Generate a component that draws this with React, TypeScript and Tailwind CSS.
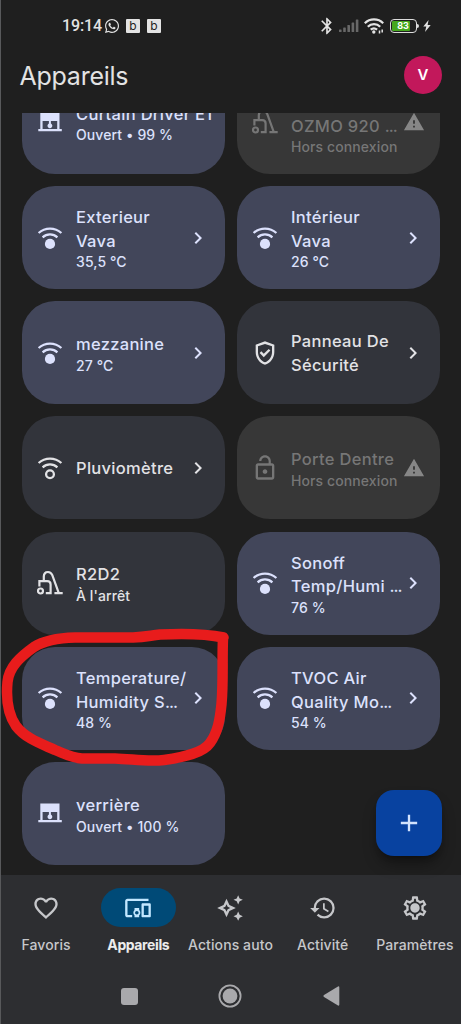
import type { ReactNode } from "react";
import {
  MdAdd,
  MdBluetooth,
  MdChevronRight,
  MdDevicesOther,
  MdFavoriteBorder,
  MdHistory,
  MdLockOpen,
  MdOutlineAutoAwesome,
  MdOutlineGppGood,
  MdOutlineSettings,
  MdWarning,
} from "react-icons/md";
import { FaWhatsapp } from "react-icons/fa";

type Tone = "on" | "off" | "offline";

type Device = {
  name: string[];
  status?: string;
  icon: ReactNode;
  tone: Tone;
  action?: "open" | "warning";
};

function SensorIcon({ filled = true }: { filled?: boolean }) {
  return (
    <svg viewBox="0 0 28 28" className="size-7" fill="none" stroke="currentColor" strokeWidth="2.3">
      <path d="M2.6 9A17 17 0 0 1 25.4 9" />
      <path d="M6.6 13.3A11 11 0 0 1 21.4 13.3" />
      {filled ? (
        <circle cx="14" cy="19.9" r="5.1" fill="currentColor" stroke="none" />
      ) : (
        <circle cx="14" cy="20.2" r="3.9" />
      )}
    </svg>
  );
}

function BlindIcon() {
  return (
    <svg viewBox="0 0 28 28" className="size-7" fill="currentColor">
      <path d="M4.3 4.5h19.2v16.6h2.3v2.1H2.3v-2.1h2Zm2.3 8.4v8.2h14.6v-8.2h-6.3v2.7a2.4 2.4 0 1 1-2 0v-2.7Z" fillRule="evenodd" />
    </svg>
  );
}

function VacuumIcon() {
  return (
    <svg viewBox="0 0 28 28" className="size-7" fill="none" stroke="currentColor" strokeWidth="2.2">
      <circle cx="4.5" cy="22" r="2.5" />
      <path d="M3.4 17.6v-5.4h7.8q3.4 0 3.4 3.4v8.6H9.8" />
      <path d="M7.8 12.4V7.6c0-3 1.8-4.6 4.2-4.6 2.2 0 3.5 1.2 4.3 3.2l6.5 18" />
      <path d="M18.4 24.2h8.3" />
    </svg>
  );
}

function SettingsIcon() {
  return (
    <span className="grid place-items-center">
      <MdOutlineSettings className="col-start-1 row-start-1 size-7" />
      <span className="col-start-1 row-start-1 size-[7px] rounded-full bg-current" />
    </span>
  );
}

const devices: Device[] = [
  { name: ["Curtain Driver E1"], status: "Ouvert • 99 %", icon: <BlindIcon />, tone: "on" },
  { name: ["\u00a0", "OZMO 920 ..."], status: "Hors connexion", icon: <VacuumIcon />, tone: "offline", action: "warning" },
  { name: ["Exterieur", "Vava"], status: "35,5 °C", icon: <SensorIcon />, tone: "on", action: "open" },
  { name: ["Intérieur", "Vava"], status: "26 °C", icon: <SensorIcon />, tone: "on", action: "open" },
  { name: ["mezzanine"], status: "27 °C", icon: <SensorIcon />, tone: "on", action: "open" },
  { name: ["Panneau De", "Sécurité"], icon: <MdOutlineGppGood className="size-7" />, tone: "off", action: "open" },
  { name: ["Pluviomètre"], icon: <SensorIcon filled={false} />, tone: "off", action: "open" },
  { name: ["Porte Dentre"], status: "Hors connexion", icon: <MdLockOpen className="size-7" />, tone: "offline", action: "warning" },
  { name: ["R2D2"], status: "À l'arrêt", icon: <VacuumIcon />, tone: "off" },
  { name: ["Sonoff", "Temp/Humi ..."], status: "76 %", icon: <SensorIcon />, tone: "on", action: "open" },
  { name: ["Temperature/", "Humidity S..."], status: "48 %", icon: <SensorIcon />, tone: "on", action: "open" },
  { name: ["TVOC Air", "Quality Mo..."], status: "54 %", icon: <SensorIcon />, tone: "on", action: "open" },
  { name: ["verrière"], status: "Ouvert • 100 %", icon: <BlindIcon />, tone: "on" },
];

const tones: Record<Tone, string> = {
  on: "bg-[#42465a] text-[#dce1fc]",
  off: "bg-[#32343b] text-[#e2e2e5]",
  offline: "bg-[#373737] text-[#767676]",
};

function DeviceCard({ device }: { device: Device }) {
  return (
    <button className={`relative flex items-center overflow-hidden rounded-[33px] pl-3.5 text-left ${tones[device.tone]}`}>
      <span className="shrink-0">{device.icon}</span>
      <span className="ml-3 grow whitespace-nowrap pt-[2.5px] font-[450]">
        {device.name.map((line) => (
          <span key={line} className="block text-[16.5px] leading-[23.7px] tracking-[0.3px]">
            {line.replace("...", "")}
            {line.endsWith("...") && <span className="tracking-[-1px]">...</span>}
          </span>
        ))}
        {device.status && <span className="block text-[14px] leading-[18px] tracking-[0.1px]">{device.status}</span>}
      </span>
      {device.action === "open" && <MdChevronRight className="absolute right-[14.5px] size-6" />}
      {device.action === "warning" && <MdWarning className="absolute right-[15px] size-[22px] text-[#868686]" />}
    </button>
  );
}

function StatusBar() {
  return (
    <div className="flex h-[52px] items-center pl-[61px] text-[#e3e3e3]">
      <span className="w-[42px] font-[Roboto] text-[16px] font-medium tracking-[-0.1px]">19:14</span>
      <FaWhatsapp className="size-4" />
      <span className="ml-1.5 flex size-3.5 items-center justify-center rounded-[1px] bg-[#e3e3e3] text-[12px] text-[#1f1f1f]">b</span>
      <span className="ml-[7px] flex size-3.5 items-center justify-center rounded-[1px] bg-[#e3e3e3] text-[12px] text-[#1f1f1f]">b</span>
      <MdBluetooth className="ml-[156px] size-5" />
      <svg viewBox="0 0 20 14" className="ml-[2px] h-3.5 w-5" fill="#686868">
        <rect x="0" y="10.5" width="2.6" height="2.5" rx=".6" />
        <rect x="4.2" y="8.5" width="2.6" height="4.5" rx=".6" />
        <rect x="8.4" y="6" width="2.6" height="7" rx=".6" />
        <rect x="12.6" y="3.5" width="2.6" height="9.5" rx=".6" />
        <rect x="16.8" y="0.5" width="2.6" height="12.5" rx=".6" />
      </svg>
      <svg viewBox="0 0 20 16" className="ml-[5px] h-4 w-5" fill="none" stroke="currentColor" strokeWidth="2.2">
        <path d="M.8 5.2a13 13 0 0 1 18.4 0" />
        <path d="M3.8 8.7a8.8 8.8 0 0 1 12.4 0" />
        <path d="M6.7 11.6a5 5 0 0 1 6.4 0" />
        <circle cx="9.8" cy="14" r="1.7" fill="currentColor" stroke="none" />
        <path d="M15.5 12.5v3M18.2 11.5v3" strokeWidth="1.5" />
      </svg>
      <span className="ml-1.5 flex h-3.5 w-[27px] items-center rounded-[4px] border-[1.5px] border-[#dcdcdc] p-[1px]">
        <span className="flex h-full w-[18px] items-center justify-center rounded-[1px] bg-[#46a81e] pl-1 text-[9px] font-bold text-white">83</span>
      </span>
      <span className="h-1 w-[2px] rounded-r bg-[#dcdcdc]" />
      <svg viewBox="0 0 8 12" className="ml-1 h-3 w-2" fill="currentColor">
        <path d="M5.6 0 .3 6.6h3L2 12l5.7-7H4.6Z" />
      </svg>
    </div>
  );
}

const tabs = [
  { label: "Favoris", icon: <MdFavoriteBorder className="size-7" /> },
  { label: "Appareils", icon: <MdDevicesOther className="size-7" />, active: true },
  { label: "Actions auto", icon: <MdOutlineAutoAwesome className="size-7" /> },
  { label: "Activité", icon: <MdHistory className="size-7" /> },
  { label: "Paramètres", icon: <SettingsIcon /> },
];

function BottomNav() {
  return (
    <nav className="flex h-[149px] flex-col bg-[#2d2e31] pt-[13px] text-[#c6c7ca]">
      <div className="-ml-px grid grid-cols-5">
        {tabs.map((tab) => (
          <button key={tab.label} className="flex flex-col items-center">
            <span className={`flex h-[39px] w-[75px] items-center justify-center rounded-full ${tab.active ? "bg-[#004a77] text-[#c2e7ff]" : ""}`}>
              {tab.icon}
            </span>
            <span className={`mt-2 whitespace-nowrap text-[14px] leading-5 ${tab.active ? "font-bold tracking-[-0.4px] text-[#ececec]" : "font-[450] tracking-[0.1px]"}`}>
              {tab.label}
            </span>
          </button>
        ))}
      </div>
      <div className="mt-[29px] flex items-center pl-[120px] text-[#a9a9ac]">
        <span className="size-[17px] rounded-[3px] bg-current" />
        <svg viewBox="0 0 24 24" className="ml-20 size-6" fill="none" stroke="currentColor">
          <circle cx="12" cy="12" r="10.6" strokeWidth="1.8" />
          <circle cx="12" cy="12" r="7.4" fill="currentColor" stroke="none" />
        </svg>
        <svg viewBox="0 0 17 20" className="ml-[81px] h-5 w-[17px]" fill="currentColor">
          <path d="M15 .5q1.3-.6 1.3 1v17q0 1.6-1.3 1L1 11q-1.1-1 0-2Z" />
        </svg>
      </div>
    </nav>
  );
}

export default function App() {
  return (
    <div className="relative flex h-[1024px] w-[461px] flex-col overflow-hidden border-l border-[#58595b] bg-[#1f1f1f] font-[Inter,sans-serif]">
      <StatusBar />
      <header className="flex h-[61px] items-start justify-between pl-[18.5px] pr-[19px]">
        <h1 className="pt-1.5 text-[25px] leading-9 tracking-[-0.25px] text-[#e3e3e3]">Appareils</h1>
        <span className="mt-1 flex size-[38px] items-center justify-center rounded-full bg-[#c2185b] text-[15px] font-semibold text-white">V</span>
      </header>
      <main className="h-[762px] overflow-hidden">
        <div className="-mt-[42.2px] grid auto-rows-[103px] grid-cols-[202.5px_202.5px] gap-x-[12.5px] gap-y-[12.2px] pl-[21px]">
          {devices.map((device) => (
            <DeviceCard key={device.name.join(" ")} device={device} />
          ))}
        </div>
      </main>
      <BottomNav />

      <button className="absolute left-[375px] top-[790px] flex size-[66px] items-center justify-center rounded-[18px] bg-[#0842a0] text-[#d3e3fd] shadow-lg shadow-black/40">
        <MdAdd className="size-7" />
      </button>

      {/* hand-drawn marker around the humidity sensor */}
      <svg viewBox="0 0 240 150" className="pointer-events-none absolute -left-px top-[620px] h-[150px] w-60" fill="none" stroke="#e81c1c" strokeWidth="10.5" strokeLinecap="round" strokeLinejoin="round">
        <path d="M223.5 17.5C207 14 180 13.5 160 14.5C148 16 145 17 133 17.5H75C58 18 45 20 34 27C20 37 9 47 7.5 62C6 78 7 93 16 106C26 119 42 124 55 130C65 134 72 138 82 138.5H115C132 139 148 142 164 140C185 137 203 133 210 123C218 112 220 99 221.5 84C223.5 62 222 40 223 18" />
      </svg>
    </div>
  );
}
